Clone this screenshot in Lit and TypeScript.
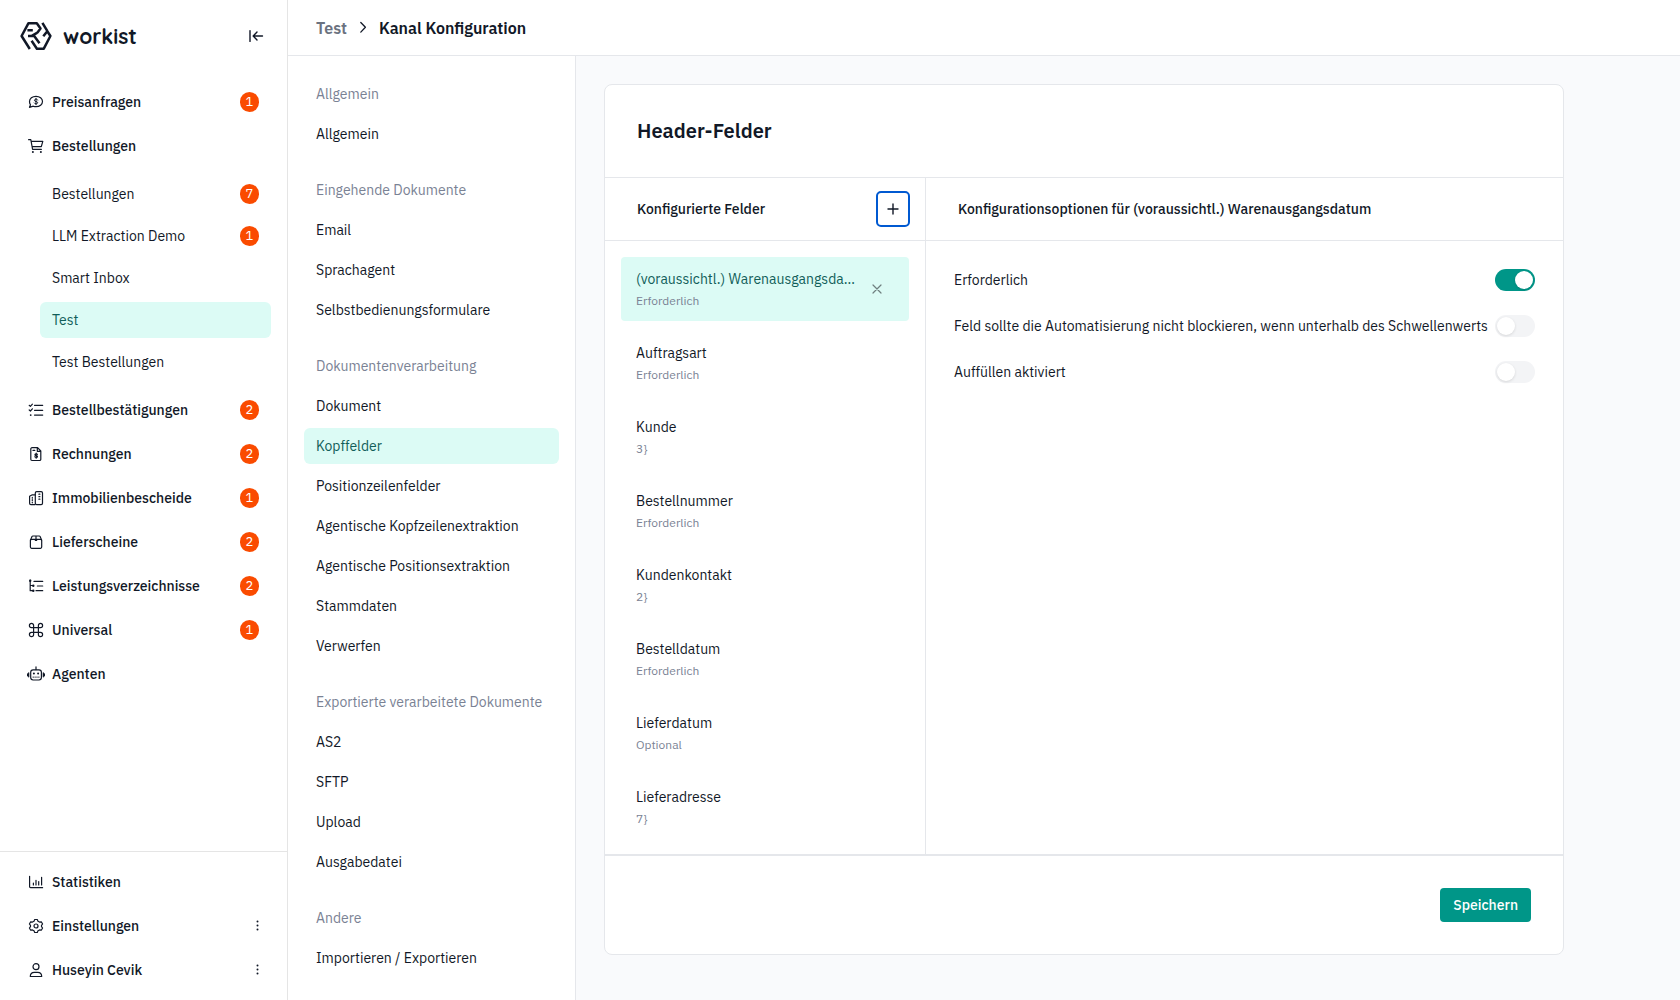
import { LitElement, html, css, svg, nothing } from "lit";
import type { SVGTemplateResult } from "lit";
import { customElement, state } from "lit/decorators.js";
import { classMap } from "lit/directives/class-map.js";

const icons: Record<string, SVGTemplateResult> = {
  quote: svg`<path d="M1.500 13.300l1-2.500a5.300 5.300 0 0 1-1-3.200C1.500 4.600 4.300 2.300 8 2.300s6.500 2.300 6.500 5.200-2.800 5.200-6.500 5.200c-1 0-1.900-.2-2.700-.5z"/><path d="M9.700 6c-.3-.6-.8-.8-1.700-.8s-1.600.4-1.600 1.100c0 1.600 3.300.8 3.300 2.400 0 .7-.7 1.100-1.700 1.100-.9 0-1.500-.3-1.800-.8M8 4.300v6.400" stroke-width="1"/>`,
  cart: svg`<path d="M.6 1.700h2.200l1.800 9.600h8.800M3.100 3.300h11.700l-1.500 5.400H4.200"/><circle cx="4.900" cy="13.900" r="1" class="solid"/><circle cx="12.900" cy="13.900" r="1" class="solid"/>`,
  checks: svg`<path d="M1.200 3.300l1.200 1.100 2-2.200M1.200 8l1.200 1 2-2.200M6.500 3.300h8.200M6.500 8.300h8.200M6.500 13.100h8.200"/><circle cx="2.700" cy="13.100" r=".9" class="solid"/>`,
  invoice: svg`<path d="M4 1.700h5.600l3.200 3.300v8.300a1.200 1.200 0 0 1-1.200 1.200H4a1.200 1.200 0 0 1-1.200-1.200V2.900A1.200 1.200 0 0 1 4 1.700zM9.300 1.900v3.400h3.400"/><path d="M9.400 8.400c-.2-.5-.6-.6-1.200-.6-.8 0-1.300.3-1.300.9 0 1.200 2.600.6 2.600 1.900 0 .6-.6.900-1.300.9s-1.100-.2-1.400-.7M8.200 7v5.200M5 4.400h1.800"/>`,
  buildings: svg`<rect x="7.300" y="1.600" width="7.200" height="13" rx="1.400"/><path d="M7.100 4.800H4.300L1.600 6.200v7.100a1.300 1.300 0 0 0 1.300 1.300h4.200"/><path d="M4.300 7.400v.8M4.300 9.700v.8M4.300 12v.8M10.900 4.200h1M10.900 6.700h1M10.900 9.200h1"/>`,
  box: svg`<rect x="2.400" y="5.300" width="11.300" height="9" rx="1.200"/><path d="M2.500 5.900l1.500-3.300a1 1 0 0 1 .9-.6h6.300a1 1 0 0 1 .9.600l1.500 3.300M8 2v3.300M7.300 6.300h1.400"/>`,
  tree: svg`<path d="M2.200 2v10.700h2.600M2.200 7.500h2.600M6 3.400h8.700M9.400 8h5.300M8 12.700h6.700"/><circle cx="2.200" cy="2.800" r="1.200" class="solid"/><circle cx="5.300" cy="7.700" r="1.200" class="solid"/><circle cx="5.300" cy="12.700" r="1.200" class="solid"/>`,
  command: svg`<path d="M5.600 5.600h4.800v4.800H5.600zM5.600 5.600V3.500a2.100 2.100 0 1 0-2.100 2.100zM10.400 5.600V3.500a2.100 2.100 0 1 1 2.100 2.100zM5.600 10.400v2.100a2.100 2.100 0 1 1-2.100-2.100zM10.400 10.400v2.100a2.100 2.100 0 1 0 2.100-2.100z"/>`,
  bot: svg`<rect x="2.700" y="3.800" width="10.700" height="10.200" rx="2.400"/><path d="M8 .9v2.700M.7 6.800v4M15.300 6.800v4M-.4 7.800v2M16.400 7.800v2"/><circle cx="5.900" cy="7.400" r="1" class="solid"/><circle cx="10.100" cy="7.400" r="1" class="solid"/><path d="M5.200 11.600v-.8M7.100 11.600v-.8M9 11.600v-.8M10.900 11.600v-.8" stroke-width=".8"/>`,
  stats: svg`<path d="M1.600 2.300v10.400a1 1 0 0 0 1 1h12M5.400 10.900V9.100M8 10.900V6.300M10.700 10.900V7.600M13.600 10.900V3.300"/>`,
  gear: svg`<path d="M6.700 1.500h2.600l.7 1.700 1.500.9 1.800-.3 1.300 2.200-1.100 1.400v1.200l1.100 1.400-1.300 2.200-1.800-.3-1.500.9-.7 1.700H6.700L6 12.800l-1.500-.9-1.800.3L1.400 10l1.100-1.400V7.400L1.400 6l1.300-2.200 1.800.3L6 3.200z"/><circle cx="8" cy="8" r="2"/>`,
  user: svg`<circle cx="8" cy="4.700" r="3"/><path d="M2.300 14.500c0-2.900 1.800-4.100 4-4.100h3.400c2.200 0 4 1.200 4 4.100z"/>`,
};

const icon = (name: string) =>
  html`<svg class="icon" viewBox="0 0 16 16" aria-hidden="true">${icons[name]}</svg>`;

interface NavItem {
  label: string;
  icon: string;
  count?: number;
  menu?: boolean;
  children?: { label: string; count?: number; active?: boolean }[];
}

const mainNav: NavItem[] = [
  { label: "Preisanfragen", icon: "quote", count: 1 },
  {
    label: "Bestellungen",
    icon: "cart",
    children: [
      { label: "Bestellungen", count: 7 },
      { label: "LLM Extraction Demo", count: 1 },
      { label: "Smart Inbox" },
      { label: "Test", active: true },
      { label: "Test Bestellungen" },
    ],
  },
  { label: "Bestellbestätigungen", icon: "checks", count: 2 },
  { label: "Rechnungen", icon: "invoice", count: 2 },
  { label: "Immobilienbescheide", icon: "buildings", count: 1 },
  { label: "Lieferscheine", icon: "box", count: 2 },
  { label: "Leistungsverzeichnisse", icon: "tree", count: 2 },
  { label: "Universal", icon: "command", count: 1 },
  { label: "Agenten", icon: "bot" },
];

const footerNav: NavItem[] = [
  { label: "Statistiken", icon: "stats" },
  { label: "Einstellungen", icon: "gear", menu: true },
  { label: "Huseyin Cevik", icon: "user", menu: true },
];

const configNav: { title: string; items: string[] }[] = [
  { title: "Allgemein", items: ["Allgemein"] },
  { title: "Eingehende Dokumente", items: ["Email", "Sprachagent", "Selbstbedienungsformulare"] },
  {
    title: "Dokumentenverarbeitung",
    items: [
      "Dokument",
      "Kopffelder",
      "Positionzeilenfelder",
      "Agentische Kopfzeilenextraktion",
      "Agentische Positionsextraktion",
      "Stammdaten",
      "Verwerfen",
    ],
  },
  { title: "Exportierte verarbeitete Dokumente", items: ["AS2", "SFTP", "Upload", "Ausgabedatei"] },
  { title: "Andere", items: ["Importieren / Exportieren"] },
];

const fields: [string, string][] = [
  ["(voraussichtl.) Warenausgangsdatum", "Erforderlich"],
  ["Auftragsart", "Erforderlich"],
  ["Kunde", "3}"],
  ["Bestellnummer", "Erforderlich"],
  ["Kundenkontakt", "2}"],
  ["Bestelldatum", "Erforderlich"],
  ["Lieferdatum", "Optional"],
  ["Lieferadresse", "7}"],
];

const shared = css`
  * {
    box-sizing: border-box;
  }
  a {
    color: inherit;
    text-decoration: none;
  }
  button {
    font: inherit;
    color: inherit;
    background: none;
    border: 0;
    padding: 0;
    cursor: pointer;
  }
  ul {
    list-style: none;
    margin: 0;
    padding: 0;
  }
  svg {
    display: block;
    flex: none;
    fill: none;
    stroke: currentColor;
    stroke-width: 1.2;
    stroke-linecap: round;
    stroke-linejoin: round;
    overflow: visible;
  }
  .solid {
    fill: currentColor;
    stroke: none;
  }
`;

@customElement("app-sidebar")
export class AppSidebar extends LitElement {
  static styles = [
    shared,
    css`
      :host {
        display: flex;
        flex-direction: column;
        background: #fff;
        border-right: 1px solid #e5e5e5;
      }
      .brand {
        display: flex;
        align-items: center;
        justify-content: space-between;
        height: 72px;
        padding: 0 23px 0 20px;
      }
      .logo {
        display: flex;
        align-items: center;
        gap: 11px;
        font: 700 21px/28px Quicksand, Lato, sans-serif;
      }
      .mark {
        width: 32px;
        height: 28px;
        stroke-width: 2.5;
        stroke-linecap: butt;
      }
      .collapse svg {
        width: 16px;
        height: 16px;
        stroke-width: 1.4;
      }
      .list {
        display: flex;
        flex-direction: column;
        gap: 8px;
        padding: 12px 16px;
      }
      .main {
        flex: 1;
      }
      .row {
        display: flex;
        align-items: center;
        gap: 8px;
        height: 36px;
        padding: 0 12px;
        font-weight: 500;
      }
      .row .label {
        flex: 1;
      }
      .icon {
        width: 16px;
        height: 16px;
      }
      .sub {
        display: flex;
        flex-direction: column;
        gap: 6px;
        margin: 12px 0 4px 24px;
      }
      .sub .row {
        font-weight: 400;
        border-radius: 6px;
      }
      .active {
        background: #dcfbf5;
        color: #115e59;
      }
      .badge {
        width: 19px;
        height: 20px;
        border-radius: 10px;
        background: #fa4b00;
        color: #fff;
        font-size: 13px;
        font-weight: 400;
        text-align: center;
      }
      .bottom {
        border-top: 1px solid #e5e5e5;
      }
      .more svg {
        width: 3px;
        height: 12px;
      }
    `,
  ];

  private row(label: string, opts: { icon?: string; count?: number; active?: boolean }) {
    return html`<a
      href="#"
      class=${classMap({ row: true, active: !!opts.active })}
      aria-current=${opts.active ? "page" : nothing}
    >
      ${opts.icon ? icon(opts.icon) : nothing}
      <span class="label">${label}</span>
      ${opts.count ? html`<span class="badge">${opts.count}</span>` : nothing}
    </a>`;
  }

  render() {
    return html`
      <div class="brand">
        <a class="logo" href="#">
          <svg class="mark" viewBox="0 0 32 28" aria-hidden="true">
            <path d="M9.800 27L1.600 14 8.500 1.200h8.300l3.700 5.300-3.200 4.200M7.400 8.300h5.400M8 14h6.200l5.300 7.200M11.800 13.800l5.600-3.200M11.600 18.800l5.300 7.900h6.900L30.400 14 27.300 9.200l-4 5M22.400.900l5 8.200"/>
          </svg>
          <span>workist</span>
        </a>
        <button class="collapse" aria-label="Navigation einklappen">
          <svg viewBox="0 0 16 16" aria-hidden="true"><path d="M2 2.600v10.800M14.500 8h-9M9 4L5.200 8 9 12"/></svg>
        </button>
      </div>
      <nav class="list main">
        ${mainNav.map(
          (item) => html`<div>
            ${this.row(item.label, item)}
            ${item.children
              ? html`<div class="sub">${item.children.map((c) => this.row(c.label, c))}</div>`
              : nothing}
          </div>`
        )}
      </nav>
      <div class="list bottom">
        ${footerNav.map(
          (item) => html`<div class="row">
            ${icon(item.icon)}<a href="#" class="label">${item.label}</a>
            ${item.menu
              ? html`<button class="more" aria-label="Menü ${item.label}">
                  <svg viewBox="0 0 3 12" aria-hidden="true">
                    <circle class="solid" cx="1.500" cy="1.500" r="1"/><circle class="solid" cx="1.500" cy="5.500" r="1"/><circle class="solid" cx="1.500" cy="9.500" r="1"/>
                  </svg>
                </button>`
              : nothing}
          </div>`
        )}
      </div>
    `;
  }
}

@customElement("config-nav")
export class ConfigNav extends LitElement {
  static styles = [
    shared,
    css`
      :host {
        display: block;
        background: #fff;
        border-right: 1px solid #e5e7eb;
        padding: 20px 16px;
      }
      nav {
        display: flex;
        flex-direction: column;
        gap: 16px;
      }
      .title,
      .link {
        display: block;
        margin: 0 0 4px;
        padding: 0 12px;
        font-size: 14px;
        font-weight: 400;
        line-height: 36px;
        border-radius: 6px;
      }
      .title {
        color: #7a8294;
      }
      .active {
        background: #dcfbf5;
        color: #115e59;
      }
    `,
  ];

  render() {
    return html`<nav aria-label="Konfiguration">
      ${configNav.map(
        (group) => html`<section>
          <h2 class="title">${group.title}</h2>
          ${group.items.map(
            (item) =>
              html`<a href="#" class=${classMap({ link: true, active: item === "Kopffelder" })}>${item}</a>`
          )}
        </section>`
      )}
    </nav>`;
  }
}

@customElement("header-fields")
export class HeaderFields extends LitElement {
  @state() private selected = 0;

  static styles = [
    shared,
    css`
      :host {
        display: block;
        max-width: 960px;
        background: #fff;
        border: 1px solid #e5e7eb;
        border-radius: 8px;
      }
      h1 {
        margin: 0;
        padding: 32px;
        font-size: 20px;
        font-weight: 600;
        line-height: 28px;
        border-bottom: 1px solid #e5e7eb;
      }
      .columns {
        display: grid;
        grid-template-columns: 320px 1fr;
      }
      .options {
        border-left: 1px solid #e5e7eb;
      }
      .head {
        display: flex;
        align-items: center;
        justify-content: space-between;
        height: 63px;
        padding: 0 15px 0 32px;
        border-bottom: 1px solid #e5e7eb;
      }
      h2 {
        margin: 0;
        font-size: 14px;
        font-weight: 500;
        line-height: 20px;
      }
      .add {
        display: grid;
        place-items: center;
        width: 34px;
        height: 36px;
        border: 2px solid #0059d1;
        border-radius: 5px;
      }
      .add svg {
        width: 12px;
        height: 12px;
        stroke-width: 1.4;
      }
      .fields {
        display: flex;
        flex-direction: column;
        gap: 10px;
        padding: 16px 16px 15px;
      }
      .field {
        display: flex;
        align-items: center;
        gap: 8px;
        height: 64px;
        padding: 0 20px 0 15px;
        border-radius: 4px;
      }
      .field.active {
        background: #dcfbf5;
      }
      .active .name {
        color: #115e59;
      }
      .pick {
        flex: 1;
        min-width: 0;
        padding-top: 2px;
        text-align: left;
      }
      .name,
      .kind {
        display: block;
        line-height: 22px;
      }
      .name {
        overflow: hidden;
        white-space: nowrap;
        text-overflow: ellipsis;
      }
      .kind {
        font-size: 12px;
        color: #7a8294;
      }
      .remove {
        display: grid;
        place-items: center;
        width: 24px;
        height: 24px;
        color: #6f7f7f;
      }
      .remove svg {
        width: 8px;
        height: 8px;
      }
      .switches {
        display: flex;
        flex-direction: column;
        gap: 24px;
        padding: 28px;
      }
      .switch {
        display: flex;
        align-items: center;
        justify-content: space-between;
        gap: 4px;
        line-height: 22px;
      }
      .toggle {
        appearance: none;
        display: block;
        flex: none;
        width: 40px;
        height: 22px;
        margin: 0;
        padding: 2px;
        border-radius: 11px;
        background: #f3f4f6;
        cursor: pointer;
      }
      .toggle::before {
        content: "";
        display: block;
        width: 18px;
        height: 18px;
        border-radius: 9px;
        background: #fff;
        box-shadow: 0 1px 3px rgb(0 0 0 / 12%);
      }
      .toggle:checked {
        background: #009688;
      }
      .toggle:checked::before {
        margin-left: auto;
      }
      .footer {
        display: flex;
        justify-content: flex-end;
        padding: 32px;
        border-top: 2px solid #e5e7eb;
      }
      .save {
        height: 34px;
        padding: 0 13px;
        border-radius: 4px;
        background: #009688;
        color: #fff;
        font-weight: 500;
      }
    `,
  ];

  private toggle(label: string, on: boolean) {
    return html`<label class="switch"
      ><span>${label}</span><input type="checkbox" role="switch" class="toggle" .checked=${on}
    /></label>`;
  }

  render() {
    return html`
      <h1>Header-Felder</h1>
      <div class="columns">
        <section>
          <div class="head">
            <h2>Konfigurierte Felder</h2>
            <button class="add" aria-label="Feld hinzufügen">
              <svg viewBox="0 0 12 12" aria-hidden="true"><path d="M6 1v10M1 6h10"/></svg>
            </button>
          </div>
          <ul class="fields">
            ${fields.map(
              ([name, kind], i) => html`<li class=${classMap({ field: true, active: i === this.selected })}>
                <button class="pick" @click=${() => (this.selected = i)}>
                  <span class="name">${name}</span><span class="kind">${kind}</span>
                </button>
                ${i === this.selected
                  ? html`<button class="remove" aria-label="Feld entfernen">
                      <svg viewBox="0 0 8 8" aria-hidden="true"><path d="M0 0l8 8M8 0L0 8"/></svg>
                    </button>`
                  : nothing}
              </li>`
            )}
          </ul>
        </section>
        <section class="options">
          <div class="head">
            <h2>Konfigurationsoptionen für (voraussichtl.) Warenausgangsdatum</h2>
          </div>
          <div class="switches">
            ${this.toggle("Erforderlich", true)}
            ${this.toggle(
              "Feld sollte die Automatisierung nicht blockieren, wenn unterhalb des Schwellenwerts",
              false
            )}
            ${this.toggle("Auffüllen aktiviert", false)}
          </div>
        </section>
      </div>
      <div class="footer"><button class="save">Speichern</button></div>
    `;
  }
}

@customElement("app-root")
export class AppRoot extends LitElement {
  static styles = [
    shared,
    css`
      :host {
        display: grid;
        grid-template-columns: 288px 1fr;
        min-height: 100vh;
        font: 400 14px/20px "IBM Plex Sans", Roboto, sans-serif;
        color: #111827;
        background: #f9fafc;
      }
      .page {
        display: flex;
        flex-direction: column;
        min-width: 0;
      }
      .topbar {
        display: flex;
        align-items: center;
        gap: 12px;
        height: 56px;
        padding: 0 28px;
        background: #fff;
        border-bottom: 1px solid #e5e7eb;
        font-size: 16px;
        font-weight: 600;
        line-height: 24px;
      }
      .parent {
        color: #6b7280;
      }
      .topbar svg {
        width: 8px;
        height: 12px;
        stroke-width: 1.3;
      }
      .body {
        flex: 1;
        display: grid;
        grid-template-columns: 288px 1fr;
      }
      .content {
        padding: 28px;
        min-width: 0;
      }
    `,
  ];

  render() {
    return html`
      <app-sidebar></app-sidebar>
      <div class="page">
        <header class="topbar">
          <a href="#" class="parent">Test</a>
          <svg viewBox="0 0 8 12" aria-hidden="true"><path d="M1.800.500l4.600 4.800-4.600 4.800"/></svg>
          <span>Kanal Konfiguration</span>
        </header>
        <div class="body">
          <config-nav></config-nav>
          <main class="content"><header-fields></header-fields></main>
        </div>
      </div>
    `;
  }
}
